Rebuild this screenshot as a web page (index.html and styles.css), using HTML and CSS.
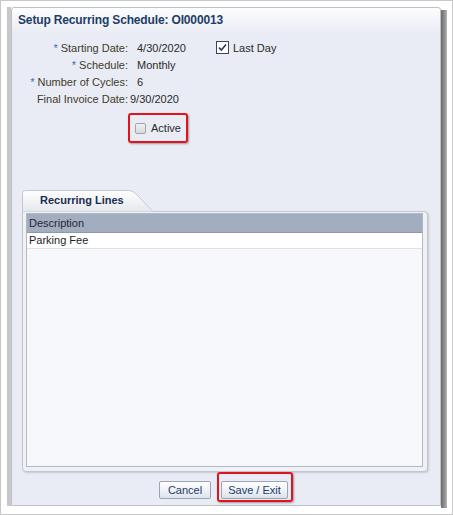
FILE: index.html
```html
<!DOCTYPE html>
<html>
<head>
<meta charset="utf-8">
<link rel="stylesheet" href="styles.css">
</head>
<body>
<div class="frame">
  <div class="backdrop"></div>
  <div class="dialog">
    <div class="title">Setup Recurring Schedule: OI000013</div>
    <div class="form">
      <div class="row">
        <span class="lbl"><span class="req">*</span> Starting Date:</span>
        <span class="val">4/30/2020</span>
        <span class="lastday">
          <svg class="chk" width="13" height="13" viewBox="0 0 13 13"><rect x="0.5" y="0.5" width="12" height="12" fill="#fff" stroke="#3a4659"/><path d="M3 6.6 L5.4 9 L10 3.6" fill="none" stroke="#2d3a52" stroke-width="1.6"/></svg>
          <span>Last Day</span>
        </span>
      </div>
      <div class="row">
        <span class="lbl"><span class="req">*</span> Schedule:</span>
        <span class="val">Monthly</span>
      </div>
      <div class="row">
        <span class="lbl"><span class="req">*</span> Number of Cycles:</span>
        <span class="val">6</span>
      </div>
      <div class="row">
        <span class="lbl">Final Invoice Date:</span>
        <span class="val tight">9/30/2020</span>
      </div>
    </div>
    <div class="active-row">
      <div class="hl">
        <span class="cb"></span>
        <span>Active</span>
      </div>
    </div>
    <div class="tab-row">
      <div class="tab">
        <svg class="tab-bg" width="132" height="22" viewBox="0 0 132 22"><defs><linearGradient id="tg" x1="0" y1="0" x2="0" y2="1"><stop offset="0" stop-color="#ffffff"/><stop offset="1" stop-color="#e4e7ee"/></linearGradient></defs><path d="M0.5 22 V3.5 Q0.5 0.5 3.5 0.5 H106 Q110 0.5 113 3 L131.5 22 Z" fill="url(#tg)" stroke="#c4c8d1"/></svg>
        <span class="tab-text">Recurring Lines</span>
      </div>
    </div>
    <div class="panel">
      <div class="table">
        <div class="thead">Description</div>
        <div class="trow">Parking Fee</div>
      </div>
    </div>
    <div class="buttons">
      <button class="btn cancel">Cancel</button>
      <div class="hl2"><button class="btn save">Save / Exit</button></div>
    </div>
  </div>
  <div class="shadow"></div>
</div>
</body>
</html>
```

FILE: styles.css
```css
* { box-sizing: border-box; margin: 0; padding: 0; }
body {
  margin: 0;
  background: #fff;
  font-family: "Liberation Sans", Arial, sans-serif;
  font-size: 11px;
  color: #2a2a2a;
}
.frame {
  width: 453px;
  height: 515px;
  border: 1px solid #c8c8c8;
  padding: 6px 5px 8px 6px;
  display: flex;
  align-items: flex-start;
  background: #fff;
}
.backdrop {
  width: 4px;
  height: 499px;
  flex: none;
  background: #c9c9c9;
}
.dialog {
  width: 430px;
  height: 499px;
  flex: none;
  border: 1px solid #bcc0c9;
  border-radius: 3px 3px 0 0;
  background: linear-gradient(#fdfdfe 0, #e9ecf4 26px, #e9ecf4 100%);
  display: flex;
  flex-direction: column;
}
.shadow {
  width: 6px;
  height: 498px;
  flex: none;
  margin-top: 3px;
  background: linear-gradient(to right, #6c6c6c, #8a8a8a 50%, #b6b6b6);
}
.title {
  padding: 4px 0 0 6px;
  height: 20px;
  line-height: 16px;
  font-size: 12px;
  font-weight: bold;
  letter-spacing: -0.15px;
  color: #1c3d66;
}
.form {
  margin-top: 12px;
}
.row {
  display: flex;
  align-items: center;
  height: 17px;
  line-height: 17px;
}
.lbl {
  width: 116px;
  flex: none;
  text-align: right;
  color: #3f3a2a;
  white-space: nowrap;
}
.req { color: #3d6db5; }
.val {
  margin-left: 9px;
  width: 79px;
  flex: none;
  color: #2a2a2a;
}
.val.tight { margin-left: 2px; }
.lastday {
  display: flex;
  align-items: center;
  gap: 4px;
  color: #2a2a2a;
}
.chk { display: block; margin-top: -2px; }
.active-row {
  margin-top: 5px;
  padding-left: 116px;
  display: flex;
}
.hl {
  display: flex;
  align-items: center;
  height: 30px;
  width: 60px;
  border: 2px solid #e3131b;
  border-radius: 3px;
  padding: 0 4px 0 5px;
  box-shadow: 1px 1px 2px rgba(0, 0, 0, 0.35);
  color: #2a2a2a;
}
.cb {
  width: 11px;
  height: 11px;
  flex: none;
  border: 1px solid #a4a4a4;
  border-radius: 2px;
  background: linear-gradient(#f2f2f2, #d9d9d9);
  margin-right: 5px;
}
.tab-row {
  margin-top: 47px;
  padding-left: 10px;
  display: flex;
}
.tab {
  position: relative;
  width: 132px;
  height: 21px;
  padding-left: 18px;
}
.tab-bg {
  position: absolute;
  left: 0;
  top: 0;
}
.tab-text {
  position: relative;
  display: block;
  line-height: 21px;
  font-weight: bold;
  font-size: 11px;
  color: #1b2d52;
}
.panel {
  margin: 0 12px 0 10px;
  height: 261px;
  flex: none;
  border: 1px solid #c2c6cf;
  border-radius: 0 4px 4px 4px;
  padding: 1px 4px 4px 3px;
  background: #eff1f6;
  box-shadow: 1px 1px 2px rgba(0, 0, 0, 0.15);
  display: flex;
}
.table {
  flex: 1;
  border: 1px solid #b3b8c2;
  background: #f7f8fb;
}
.thead {
  height: 19px;
  line-height: 18px;
  padding-left: 2px;
  background: #a3adc0;
  border-bottom: 1px solid #8f98aa;
  color: #26263a;
}
.trow {
  height: 16px;
  line-height: 15px;
  padding-left: 2px;
  background: #fff;
  border-bottom: 1px solid #dfe1e6;
  color: #1e1e1e;
}
.buttons {
  display: flex;
  justify-content: center;
  align-items: flex-start;
  gap: 6px;
  height: 30px;
}
.btn {
  height: 18px;
  border: 1px solid #9ba4b5;
  border-radius: 2px;
  background: linear-gradient(#fefefe, #eef1f6 55%, #dde2eb);
  font-family: "Liberation Sans", Arial, sans-serif;
  font-size: 11px;
  color: #1e3a66;
  line-height: 16px;
  padding: 0;
  text-align: center;
}
.cancel { width: 52px; margin-top: 9px; }
.save { width: 67px; display: block; }
.hl2 {
  border: 2px solid #e3131b;
  border-radius: 3px;
  padding: 7px 3px 1px 2px;
  height: 30px;
  box-shadow: 1px 1px 2px rgba(0, 0, 0, 0.35);
}
```
